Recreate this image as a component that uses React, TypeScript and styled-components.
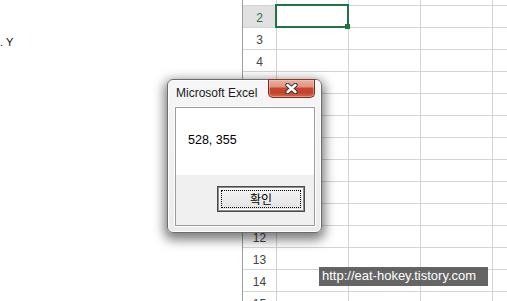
import React from "react";
import styled, { createGlobalStyle } from "styled-components";

const GlobalStyle = createGlobalStyle`
  html, body { margin: 0; padding: 0; background: #ffffff; overflow: hidden; }
  * { box-sizing: border-box; }
`;

const Page = styled.div`
  position: relative;
  width: 507px;
  height: 301px;
  overflow: hidden;
  display: flex;
  background: #ffffff;
  font-family: "Liberation Sans", Arial, sans-serif;
`;

const LeftPane = styled.div`
  width: 242px;
  flex-shrink: 0;
  padding-top: 36px;
  font-size: 11px;
  line-height: 13px;
  color: #111;
  white-space: pre;
`;

const Sheet = styled.div`
  flex: 1;
  margin-top: -16px;
  border-left: 1px solid #9e9e9e;
  display: flex;
  flex-direction: column;
  overflow: hidden;
`;

const Row = styled.div`
  display: flex;
  height: 22px;
  flex-shrink: 0;
`;

const RowHeader = styled.div<{ $selected?: boolean }>`
  width: 34px;
  flex-shrink: 0;
  border-right: 1px solid #d0d0d0;
  border-bottom: 1px solid #d4d4d4;
  background: ${(p) => (p.$selected ? "#e1e1e1" : "#ffffff")};
  color: ${(p) => (p.$selected ? "#217346" : "#444444")};
  font-family: "Liberation Sans", Arial, sans-serif;
  font-size: 12px;
  display: flex;
  align-items: center;
  justify-content: center;
  padding-top: 2px;
`;

const Cell = styled.div`
  position: relative;
  width: 72px;
  flex-shrink: 0;
  border-right: 1px solid #d4d4d4;
  border-bottom: 1px solid #d4d4d4;
`;

const Selection = styled.div`
  position: absolute;
  top: -2px;
  left: -2px;
  right: -1px;
  bottom: -1px;
  border: 2px solid #217346;
  z-index: 1;
`;

const FillHandle = styled.div`
  position: absolute;
  right: -3px;
  bottom: -3px;
  width: 5px;
  height: 5px;
  background: #217346;
`;

const Dialog = styled.div`
  position: absolute;
  left: 167px;
  top: 79px;
  width: 155px;
  height: 154px;
  border: 1px solid #6c6c6c;
  border-radius: 6px;
  background: linear-gradient(to bottom, #f6f6f6, #ebebeb);
  box-shadow: 0 4px 11px 3px rgba(0, 0, 0, 0.5), inset 0 0 0 1px #ffffff;
  display: flex;
  flex-direction: column;
  padding: 0 6px 6px 7px;
  z-index: 5;
`;

const TitleBar = styled.div`
  height: 27px;
  display: flex;
  justify-content: space-between;
  align-items: flex-start;
`;

const Title = styled.div`
  margin-top: 6px;
  padding-left: 1px;
  font-family: "Liberation Sans", Arial, sans-serif;
  font-size: 12px;
  line-height: 14px;
  color: #1a1a1a;
`;

const CloseButton = styled.div`
  margin-top: -1px;
  width: 47px;
  height: 19px;
  border: 1px solid #7b2d20;
  border-top-color: #8a3a2c;
  border-radius: 0 0 5px 5px;
  background: linear-gradient(
    to bottom,
    #eab0a2 0%,
    #e09482 40%,
    #c8462d 48%,
    #c4442b 75%,
    #d5694f 100%
  );
  box-shadow: inset 0 0 0 1px rgba(255, 210, 200, 0.45);
  display: flex;
  align-items: center;
  justify-content: center;
`;

const Panel = styled.div`
  flex: 1;
  border: 1px solid #9a9a9a;
  box-shadow: 0 0 0 1px #ffffff;
  display: flex;
  flex-direction: column;
  background: #f0f0f0;
`;

const Message = styled.div`
  height: 67px;
  background: #ffffff;
  padding: 25px 0 0 12px;
  font-family: "Liberation Sans", Arial, sans-serif;
  font-size: 12.5px;
  line-height: 15px;
  color: #000;
`;

const ButtonRow = styled.div`
  flex: 1;
  display: flex;
  justify-content: flex-end;
  align-items: flex-start;
  padding: 11px 9px 0 0;
`;

const OkButton = styled.div`
  position: relative;
  width: 88px;
  height: 26px;
  border: 1px solid #4a4a4a;
  background: linear-gradient(to bottom, #f4f4f4, #e2e2e2);
  box-shadow: inset 0 0 0 1px #8c8c8c, inset 0 0 0 2px #fbfbfb;
  display: flex;
  align-items: center;
  justify-content: center;
  font-family: "Noto Sans CJK KR", "Noto Sans", sans-serif;
  font-size: 12px;
  color: #000;
  padding-bottom: 1px;

  &::after {
    content: "";
    position: absolute;
    top: 3px;
    left: 3px;
    right: 3px;
    bottom: 3px;
    border: 1px dotted #000;
  }
`;

const Watermark = styled.div`
  position: absolute;
  left: 319px;
  top: 267px;
  width: 169px;
  height: 19px;
  background: rgba(80, 80, 80, 0.88);
  color: #ffffff;
  font-family: "Liberation Sans", Arial, sans-serif;
  font-size: 13px;
  line-height: 18px;
  padding-left: 3px;
  white-space: nowrap;
  z-index: 6;
`;

const rows = Array.from({ length: 15 }, (_, i) => i + 1);
const COLS = 4;

function CloseGlyph() {
  return (
    <svg width="13" height="11" viewBox="0 0 13 11">
      <path d="M2.5 2 L10.5 9 M10.5 2 L2.5 9" stroke="#3a3a3a" strokeWidth="4.4" strokeLinecap="round" fill="none" />
      <path d="M2.5 2 L10.5 9 M10.5 2 L2.5 9" stroke="#ffffff" strokeWidth="2.4" strokeLinecap="round" fill="none" />
    </svg>
  );
}

export default function App() {
  return (
    <>
      <GlobalStyle />
      <Page>
        <LeftPane>{". Y"}</LeftPane>
        <Sheet>
          {rows.map((r) => (
            <Row key={r}>
              <RowHeader $selected={r === 2}>{r === 1 ? "" : r}</RowHeader>
              {Array.from({ length: COLS }, (_, c) => (
                <Cell key={c}>
                  {r === 2 && c === 0 && (
                    <Selection>
                      <FillHandle />
                    </Selection>
                  )}
                </Cell>
              ))}
            </Row>
          ))}
        </Sheet>
        <Dialog>
          <TitleBar>
            <Title>Microsoft Excel</Title>
            <CloseButton>
              <CloseGlyph />
            </CloseButton>
          </TitleBar>
          <Panel>
            <Message>528, 355</Message>
            <ButtonRow>
              <OkButton>확인</OkButton>
            </ButtonRow>
          </Panel>
        </Dialog>
        <Watermark>http://eat-hokey.tistory.com</Watermark>
      </Page>
    </>
  );
}
